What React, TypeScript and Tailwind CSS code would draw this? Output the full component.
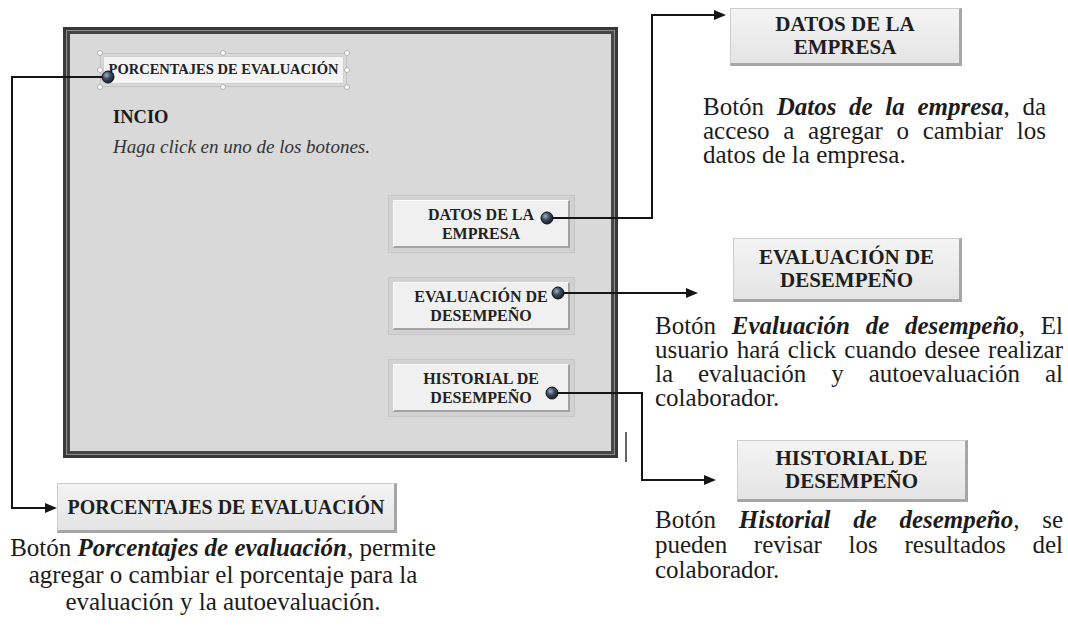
import React from "react";

function FrameButton({ l1, l2 }: { l1: string; l2: string }) {
  return (
    <div className="w-[187px] h-[58px] p-[4px] border border-[#c6c6c6] bg-[#d2d2d2]">
      <div className="h-full w-full flex flex-col items-center justify-center bg-[#f0f0f0] border-t border-l border-t-[#fbfbfb] border-l-[#fbfbfb] border-b-2 border-r-2 border-b-[#a2a2a2] border-r-[#a2a2a2] text-[16px] leading-[19px] font-bold text-[#222] text-center">
        <span>{l1}</span>
        <span>{l2}</span>
      </div>
    </div>
  );
}

function Handle({ cls }: { cls: string }) {
  return (
    <span className={"absolute w-[6px] h-[6px] rounded-full bg-white border border-[#b0b0b0] " + cls} />
  );
}

function JLine({ children }: { children: React.ReactNode }) {
  return <div className="text-justify [text-align-last:justify]">{children}</div>;
}

const boxCls =
  "absolute flex flex-col items-center justify-center bg-gradient-to-b from-[#f4f4f4] to-[#e4e4e4] border border-[#cdcdcd] border-b-[3px] border-r-[3px] border-b-[#a6a6a6] border-r-[#a6a6a6] font-bold text-[#1e1e1e]";

export default function App() {
  return (
    <div className="relative w-[1068px] h-[629px] overflow-hidden bg-white text-[#1c1c1c] font-['Liberation_Serif','Times_New_Roman',serif]">
      {/* Main window frame */}
      <div className="absolute left-[63px] top-[27px] w-[555px] h-[431px] border-[3px] border-[#383838] bg-[#8e8e8e] p-px">
        <div className="h-full w-full border-[3px] border-[#464646] bg-[#d9d9d9] flex flex-col pt-[19px] pl-[30px]">
          <div className="relative w-[247px] h-[34px] border border-[#c2c2c2] p-[2px]">
            <div className="h-full w-full bg-[#f4f4f4] border border-[#d0d0d0] flex items-center justify-center text-[14.5px] font-bold text-[#222] whitespace-nowrap">
              PORCENTAJES DE EVALUACIÓN
            </div>
            <Handle cls="-left-[4px] -top-[4px]" />
            <Handle cls="left-[119px] -top-[4px]" />
            <Handle cls="-right-[4px] -top-[4px]" />
            <Handle cls="-left-[4px] top-[13px]" />
            <Handle cls="-right-[4px] top-[13px]" />
            <Handle cls="-left-[4px] -bottom-[4px]" />
            <Handle cls="left-[119px] -bottom-[4px]" />
            <Handle cls="-right-[4px] -bottom-[4px]" />
          </div>
          <div className="mt-[15px] pl-[13px] leading-[30px]">
            <div className="font-bold text-[18.5px] text-[#1a1a1a]">INCIO</div>
            <div className="italic text-[19px] text-[#333]">Haga click en uno de los botones.</div>
          </div>
          <div className="self-end mr-[36px] mt-[33px] flex flex-col gap-[24px]">
            <FrameButton l1="DATOS DE LA" l2="EMPRESA" />
            <FrameButton l1="EVALUACIÓN DE" l2="DESEMPEÑO" />
            <FrameButton l1="HISTORIAL DE" l2="DESEMPEÑO" />
          </div>
        </div>
      </div>

      {/* Callout: Datos de la empresa */}
      <div className={boxCls + " left-[730px] top-[8px] w-[232px] h-[58px] text-[21px] leading-[23px]"}>
        <span>DATOS DE LA</span>
        <span>EMPRESA</span>
      </div>
      <div className="absolute left-[703px] top-[95px] w-[343px] text-[25px] leading-[24px]">
        <JLine>
          Botón <b><i>Datos de la empresa</i></b>, da
        </JLine>
        <JLine>acceso a agregar o cambiar los</JLine>
        <div>datos de la empresa.</div>
      </div>

      {/* Callout: Evaluación de desempeño */}
      <div className={boxCls + " left-[733px] top-[238px] w-[229px] h-[64px] text-[21px] leading-[23px]"}>
        <span>EVALUACIÓN DE</span>
        <span>DESEMPEÑO</span>
      </div>
      <div className="absolute left-[655px] top-[314px] w-[408px] text-[25px] leading-[24px]">
        <JLine>
          Botón <b><i>Evaluación de desempeño</i></b>, El
        </JLine>
        <JLine>usuario hará click cuando desee realizar</JLine>
        <JLine>la evaluación y autoevaluación al</JLine>
        <div>colaborador.</div>
      </div>

      {/* Callout: Historial de desempeño */}
      <div className={boxCls + " left-[737px] top-[440px] w-[231px] h-[62px] text-[21px] leading-[23px]"}>
        <span>HISTORIAL DE</span>
        <span>DESEMPEÑO</span>
      </div>
      <div className="absolute left-[655px] top-[507px] w-[408px] text-[25px] leading-[25px]">
        <JLine>
          Botón <b><i>Historial de desempeño</i></b>, se
        </JLine>
        <JLine>pueden revisar los resultados del</JLine>
        <div>colaborador.</div>
      </div>

      {/* Callout: Porcentajes de evaluación */}
      <div className={boxCls + " left-[57px] top-[483px] w-[340px] h-[50px] text-[20px] whitespace-nowrap"}>
        PORCENTAJES DE EVALUACIÓN
      </div>
      <div className="absolute left-[3px] top-[534px] w-[440px] text-center text-[25px] leading-[27px]">
        <div>
          Botón <b><i>Porcentajes de evaluación</i></b>, permite
        </div>
        <div>agregar o cambiar el porcentaje para la</div>
        <div>evaluación y la autoevaluación.</div>
      </div>

      {/* Connectors overlay */}
      <svg className="absolute left-0 top-0 pointer-events-none" width="1068" height="629" viewBox="0 0 1068 629">
        <defs>
          <radialGradient id="dot" cx="0.38" cy="0.35" r="0.7">
            <stop offset="0" stopColor="#9fb0c6" />
            <stop offset="0.45" stopColor="#3d4c60" />
            <stop offset="1" stopColor="#141c26" />
          </radialGradient>
        </defs>
        <g fill="none" stroke="#151515" strokeWidth="2">
          <path d="M108 77 H12 V508 H48" />
          <path d="M547 218 H652 V15 H716" />
          <path d="M558 293 H689" />
          <path d="M552 393 H642 V480 H707" />
        </g>
        <g fill="#151515">
          <polygon points="57,508 45,503 45,513" />
          <polygon points="726,15 714,10 714,20" />
          <polygon points="698,293 686,288 686,298" />
          <polygon points="716,480 704,475 704,485" />
        </g>
        <line x1="626" y1="432" x2="626" y2="462" stroke="#333" strokeWidth="1.5" />
        <g stroke="#111" strokeWidth="1">
          <circle cx="108" cy="77" r="6" fill="url(#dot)" />
          <circle cx="547" cy="218" r="6" fill="url(#dot)" />
          <circle cx="558" cy="293" r="6" fill="url(#dot)" />
          <circle cx="552" cy="393" r="6" fill="url(#dot)" />
        </g>
      </svg>
    </div>
  );
}
